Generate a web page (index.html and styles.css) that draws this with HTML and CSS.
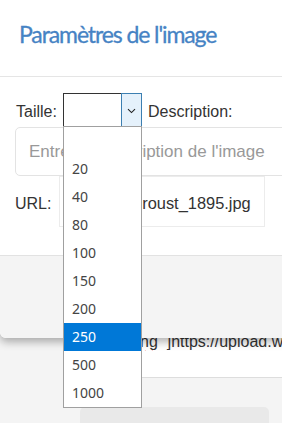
FILE: index.html
```html
<!DOCTYPE html>
<html>
<head>
  <meta charset="utf-8">
  <meta name="viewport" content="width=device-width">
  <title>Paramètres de l'image</title>
  <link rel="stylesheet" href="styles.css">
</head>
<body>
  <div class="page">
    <div class="page-panel">
      <p class="page-text"><span class="typo">ng</span>&nbsp; ]https://upload.wikimedia.org/</p>
    </div>
    <div class="page-box"></div>
  </div>

  <div class="modal">
    <div class="modal-header">
      <h4 class="modal-title">Paramètres de l'image</h4>
    </div>
    <div class="modal-body">
      <div class="row-size">
        <label class="lbl lbl-size">Taille:</label>
        <div class="select">
          <span class="select-value"></span>
          <span class="select-btn">
            <svg width="9" height="6" viewBox="0 0 9 6"><path d="M1 1.2 L4.5 4.6 L8 1.2" fill="none" stroke="#222" stroke-width="1.1"/></svg>
          </span>
        </div>
        <label class="lbl lbl-desc">Description:</label>
      </div>
      <input class="field field-desc" type="text" placeholder="Entrez la description de l'image">
      <div class="row-url">
        <label class="lbl lbl-url">URL:</label>
        <input class="field field-url" type="text" value="Marcel_Proust_1895.jpg">
      </div>
    </div>
    <div class="modal-footer"></div>
  </div>

  <ul class="dropdown">
    <li></li>
    <li>20</li>
    <li>40</li>
    <li>80</li>
    <li>100</li>
    <li>150</li>
    <li>200</li>
    <li class="selected">250</li>
    <li>500</li>
    <li>1000</li>
  </ul>
</body>
</html>
```

FILE: styles.css
```css
body {
  margin: 0;
  width: 282px;
  height: 423px;
  overflow: hidden;
  position: relative;
  background: #f4f4f4;
  font-family: "Liberation Sans", Arial, sans-serif;
  color: #333;
}

/* page under the dialog */
.page-panel {
  margin-left: 100px;
  height: 378px;
  background: #fff;
  border-bottom: 1px solid #ddd;
  box-sizing: border-box;
  display: flex;
  flex-direction: column;
  justify-content: flex-end;
}
.page-text {
  margin: 0 0 26px 0;
  padding-left: 40px;
  font-size: 16px;
  line-height: 18px;
  white-space: nowrap;
  overflow: hidden;
}
.typo {
  text-decoration: underline wavy #c00;
  text-decoration-thickness: 1px;
  text-underline-offset: 3px;
}
.page-box {
  margin: 29px 0 0 80px;
  width: 189px;
  height: 30px;
  background: #e9e9e9;
  border-radius: 5px;
}

/* dialog */
.modal {
  position: absolute;
  top: 0;
  left: 0;
  width: 310px;
  background: #fff;
  border-radius: 0 0 6px 6px;
  box-shadow: 0 4px 9px rgba(0,0,0,0.3);
}
.modal-header {
  padding: 20px 0 27px 19px;
  border-bottom: 1px solid #e5e5e5;
}
.modal-title {
  margin: 0;
  font-family: Lato, "Open Sans", sans-serif;
  font-weight: normal;
  font-size: 23px;
  line-height: 29px;
  color: #4683c4;
  letter-spacing: -1.1px;
  -webkit-text-stroke: 0.3px #4683c4;
}
.modal-body {
  padding: 16px 0 28px 15px;
}
.row-size {
  display: flex;
  align-items: center;
  height: 34px;
}
.lbl {
  font-size: 16px;
  line-height: 18px;
  padding-top: 3px;
}
.lbl-size {
  width: 47px;
  padding-left: 1px;
}
.lbl-desc {
  margin-left: 6px;
}
.select {
  display: flex;
  width: 79px;
  height: 34px;
  box-sizing: border-box;
}
.select-value {
  flex: 1;
  border: 1px solid #333;
  border-right: none;
  background: #fff;
}
.select-btn {
  width: 21px;
  box-sizing: border-box;
  border: 1px solid #3c7fb1;
  background: #e5f1fb;
  display: flex;
  align-items: center;
  justify-content: center;
  padding-top: 2px;
}
.field {
  display: block;
  margin: 0;
  box-sizing: border-box;
  font-family: "Liberation Sans", Arial, sans-serif;
  color: #333;
  background: #fff;
  outline: none;
}
.field-desc {
  width: 300px;
  height: 49px;
  border: 1px solid #e3e3e3;
  border-radius: 5px;
  padding: 0 0 0 13px;
  font-size: 17px;
}
.field-desc::placeholder {
  color: #999;
}
.row-url {
  display: flex;
  align-items: center;
}
.lbl-url {
  width: 44px;
  padding-top: 5px;
}
.field-url {
  width: 206px;
  height: 51px;
  border: 1px solid #ececec;
  border-radius: 0;
  padding: 4px 0 0 13px;
  font-size: 16.4px;
}
.modal-footer {
  height: 82px;
  background: #f4f4f4;
  border-top: 1px solid #e2e2e2;
  border-radius: 0 0 6px 6px;
}

/* open list of the size select */
.dropdown {
  position: absolute;
  top: 126px;
  left: 63px;
  width: 79px;
  box-sizing: border-box;
  margin: 0;
  padding: 0;
  list-style: none;
  background: #fff;
  border: 1px solid #a0a0a0;
  font-family: "Noto Sans", sans-serif;
  font-size: 14px;
  color: #444;
}
.dropdown li {
  height: 28px;
  line-height: 28px;
  padding-left: 8px;
}
.dropdown li.selected {
  background: #0078d7;
  color: #fff;
}
```
